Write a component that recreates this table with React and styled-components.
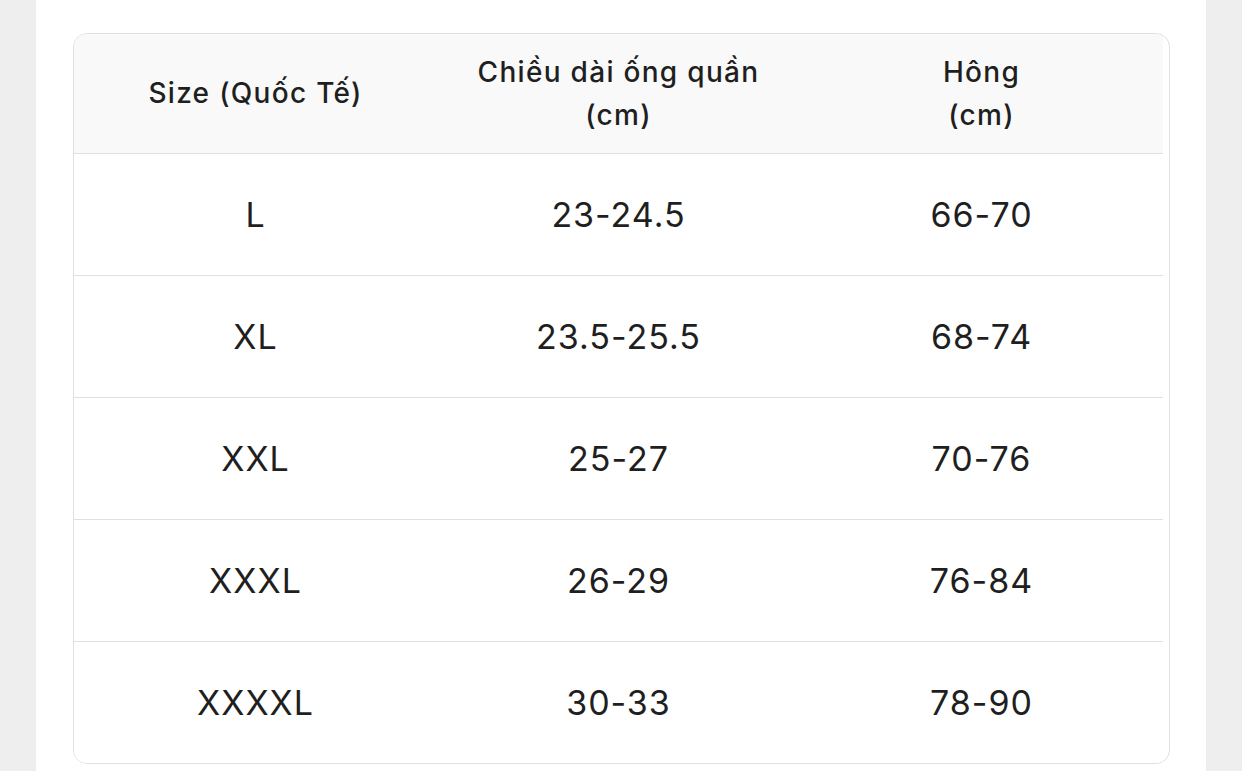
import React from 'react';
import styled, { createGlobalStyle } from 'styled-components';

const GlobalStyle = createGlobalStyle`
  html, body {
    margin: 0;
    padding: 0;
    background-color: #eeeeee;
    font-family: Inter, "Noto Sans", "Liberation Sans", sans-serif;
    color: #222;
  }
`;

const Page = styled.div`
  margin: 0 36px;
  min-height: 771px;
  background-color: #fff;
  padding: 33px 36px 8px 37px;
  box-sizing: border-box;
`;

const Card = styled.div`
  border: 1px solid #e0e0e0;
  border-radius: 14px;
  overflow: hidden;
  padding-right: 6px;
  background-color: #fff;
`;

const Row = styled.div`
  display: grid;
  grid-template-columns: repeat(3, 1fr);
  height: ${(p) => (p.$head ? '119px' : '121px')};
  background-color: ${(p) => (p.$head ? '#f9f9f9' : '#fff')};
  border-bottom: ${(p) => (p.$last ? 'none' : '1px solid #e0e0e0')};
`;

const Cell = styled.div`
  display: flex;
  align-items: center;
  justify-content: center;
  text-align: center;
  font-size: ${(p) => (p.$head ? '28px' : '34px')};
  font-weight: ${(p) => (p.$head ? 500 : 400)};
  line-height: ${(p) => (p.$head ? '43px' : '40px')};
  letter-spacing: ${(p) => (p.$head ? '1.3px' : '1px')};
  color: #1f1f1f;
`;

const rows = [
  ['L', '23-24.5', '66-70'],
  ['XL', '23.5-25.5', '68-74'],
  ['XXL', '25-27', '70-76'],
  ['XXXL', '26-29', '76-84'],
  ['XXXXL', '30-33', '78-90'],
];

export default function App() {
  return (
    <>
      <GlobalStyle />
      <Page>
        <Card>
          <Row $head>
            <Cell $head>Size (Quốc Tế)</Cell>
            <Cell $head>
              Chiều dài ống quần
              <br />
              (cm)
            </Cell>
            <Cell $head>
              Hông
              <br />
              (cm)
            </Cell>
          </Row>
          {rows.map((r, i) => (
            <Row key={r[0]} $last={i === rows.length - 1}>
              {r.map((v) => (
                <Cell key={v}>{v}</Cell>
              ))}
            </Row>
          ))}
        </Card>
      </Page>
    </>
  );
}
